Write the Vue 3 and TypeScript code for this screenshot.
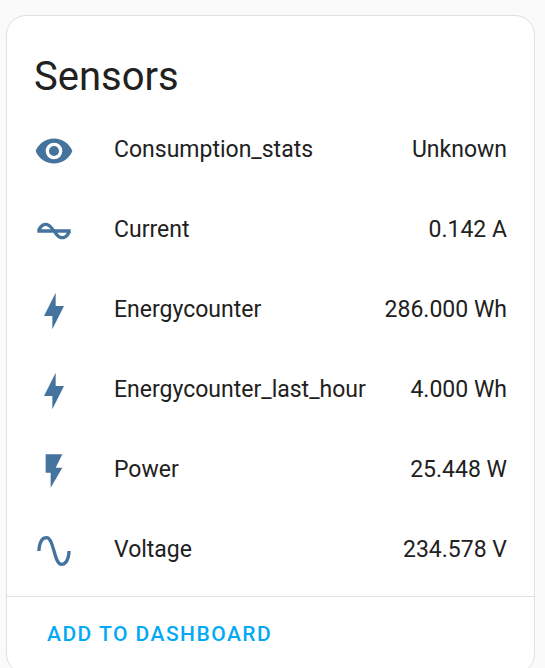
<script setup lang="ts">
interface Sensor {
  name: string
  state: string
  icon: keyof typeof icons
}

const icons = {
  eye: 'M12,9A3,3 0 0,0 9,12A3,3 0 0,0 12,15A3,3 0 0,0 15,12A3,3 0 0,0 12,9M12,17A5,5 0 0,1 7,12A5,5 0 0,1 12,7A5,5 0 0,1 17,12A5,5 0 0,1 12,17M12,4.5C7,4.5 2.73,7.61 1,12C2.73,16.39 7,19.5 12,19.5C17,19.5 21.27,16.39 23,12C21.27,7.61 17,4.5 12,4.5Z',
  current: 'M12.43 11C12.28 10.84 10 7 7 7S2.32 10.18 2 11V13H11.57C11.72 13.16 14 17 17 17S21.68 13.82 22 13V11H12.43M7 9C8.17 9 9.18 9.85 10 11H4.31C4.78 10.17 5.54 9 7 9M17 15C15.83 15 14.82 14.15 14 13H19.69C19.22 13.83 18.46 15 17 15Z',
  bolt: 'M11 15H6L13 1V9H18L11 23V15Z',
  flash: 'M7,2V13H10V22L17,10H13L17,2H7Z',
  sine: 'M16.5,21C13.5,21 12.31,16.76 11.05,12.28C10.14,9.04 9,5 7.5,5C4.11,5 4,11.93 4,12H2C2,11.63 2.06,3 7.5,3C10.5,3 11.71,7.25 12.97,11.74C13.83,14.8 15,19 16.5,19C19.94,19 20.03,12.07 20.03,12H22.03C22.03,12.37 21.97,21 16.5,21Z',
}

const sensors: Sensor[] = [
  { name: 'Consumption_stats', state: 'Unknown', icon: 'eye' },
  { name: 'Current', state: '0.142 A', icon: 'current' },
  { name: 'Energycounter', state: '286.000 Wh', icon: 'bolt' },
  { name: 'Energycounter_last_hour', state: '4.000 Wh', icon: 'bolt' },
  { name: 'Power', state: '25.448 W', icon: 'flash' },
  { name: 'Voltage', state: '234.578 V', icon: 'sine' },
]
</script>

<template>
  <main class="page">
    <section class="card">
      <h1 class="title">Sensors</h1>
      <ul class="rows">
        <li v-for="sensor in sensors" :key="sensor.name" class="row">
          <svg class="icon" viewBox="0 0 24 24" aria-hidden="true">
            <path :d="icons[sensor.icon]" />
          </svg>
          <span class="name">{{ sensor.name }}</span>
          <span class="state">{{ sensor.state }}</span>
        </li>
      </ul>
      <footer class="actions">
        <button type="button" class="add">Add to dashboard</button>
      </footer>
    </section>
  </main>
</template>

<style>
body {
  margin: 0;
  background: #fafafa;
}
</style>

<style scoped>
.page {
  padding: 15px 10px 0 6px;
  font-family: Roboto, "Liberation Sans", sans-serif;
  color: #212121;
}

.card {
  background: #fff;
  border: 1px solid #e0e0e0;
  border-radius: 20px;
}

.title {
  margin: 0;
  padding: 31px 27px 24px;
  font-size: 40px;
  font-weight: 400;
  line-height: 60px;
}

.rows {
  display: grid;
  gap: 40px;
  margin: 0;
  padding: 0 27px 25px;
  list-style: none;
}

.row {
  display: flex;
  align-items: center;
  height: 40px;
  font-size: 23px;
  line-height: 36px;
}

.icon {
  flex: none;
  width: 40px;
  height: 40px;
  margin-right: 40px;
  fill: #44739e;
}

.name {
  flex: 1;
  padding-bottom: 2px;
}

.state {
  padding-bottom: 2px;
  text-align: right;
}

.actions {
  padding: 12px 27px 14px;
  border-top: 1px solid #e0e0e0;
}

.add {
  padding: 0 13px;
  border: 0;
  background: none;
  color: #03a9f4;
  font-family: inherit;
  font-size: 21px;
  font-weight: 500;
  line-height: 50px;
  letter-spacing: 0.07em;
  text-transform: uppercase;
  cursor: pointer;
}
</style>
